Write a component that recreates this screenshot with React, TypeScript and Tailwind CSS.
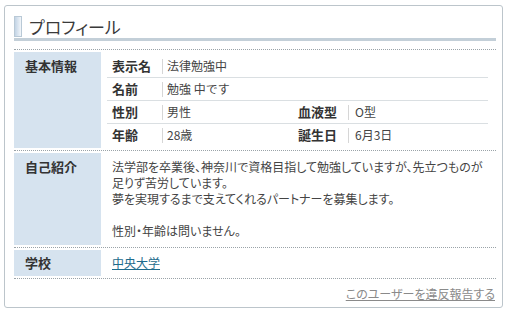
import React from "react";

const Row = ({ label, value }: { label: string; value: string }) => (
  <div className="flex items-center h-[22px]">
    <div className="w-[55px] pl-[5px] font-bold text-[13px] text-[#333]">{label}</div>
    <div className="w-px h-[15px] bg-[#d6d6d6]" />
    <div className="pl-[4px] text-[12px] text-[#444]">{value}</div>
  </div>
);

export default function App() {
  return (
    <div
      className="w-[505px] h-[312px] bg-white pt-[5px] pl-[4px] pr-[2px] pb-[4px]"
      style={{ fontFamily: '"Noto Sans CJK JP", "Noto Sans", sans-serif' }}
    >
      <div className="h-full border border-[#bcc5cb] rounded-[3px] pl-[9px] pr-[6px] pt-[10px] flex flex-col">
        {/* Title */}
        <div className="flex items-start h-[22px]">
          <div className="w-[8px] h-[21px] border border-[#b9c9d6] bg-gradient-to-r from-[#c3d4e5] to-[#f2f6fa]" />
          <div className="ml-[7px] text-[17px] leading-[21px] text-[#3a3a3a] [font-feature-settings:'palt']">
            プロフィール
          </div>
        </div>
        <div className="h-[3px] bg-[#c3cfd8]" />

        <div className="mt-[8px] border-t border-dotted border-[#9aa3a8]" />

        {/* Basic info */}
        <div className="flex py-[2px] border-b border-dotted border-[#9aa3a8]">
          <div className="w-[87px] shrink-0 bg-[#d6e3ef] pl-[11px] pt-[6px] text-[13px] leading-[16px] font-bold text-[#333]">
            基本情報
          </div>
          <div className="flex-1 pl-[6px] pr-[8px] pt-[3px] pb-[2px]">
            <div className="border-b border-[#dadfe2]">
              <Row label="表示名" value="法律勉強中" />
            </div>
            <div className="border-b border-[#dadfe2]">
              <Row label="名前" value="勉強 中です" />
            </div>
            <div className="flex border-b border-[#dadfe2]">
              <div className="w-[186px]">
                <Row label="性別" value="男性" />
              </div>
              <div className="flex items-center h-[22px]">
                <div className="w-[55px] pl-[5px] font-bold text-[13px] text-[#333]">血液型</div>
                <div className="w-px h-[15px] bg-[#d6d6d6]" />
                <div className="pl-[6px] text-[12px] text-[#444]">O型</div>
              </div>
            </div>
            <div className="flex">
              <div className="w-[186px]">
                <Row label="年齢" value="28歳" />
              </div>
              <div className="flex items-center h-[22px]">
                <div className="w-[55px] pl-[5px] font-bold text-[13px] text-[#333]">誕生日</div>
                <div className="w-px h-[15px] bg-[#d6d6d6]" />
                <div className="pl-[6px] text-[12px] text-[#444]">6月3日</div>
              </div>
            </div>
          </div>
        </div>

        {/* Self intro */}
        <div className="flex py-[2px] border-b border-dotted border-[#9aa3a8]">
          <div className="w-[87px] shrink-0 bg-[#d6e3ef] pl-[11px] pt-[6px] text-[13px] leading-[16px] font-bold text-[#333]">
            自己紹介
          </div>
          <div className="flex-1 pl-[11px] pt-[6px] pb-[6px] text-[12px] leading-[16px] text-[#444] whitespace-nowrap [font-feature-settings:'palt']">
            <div>法学部を卒業後、神奈川で資格目指して勉強していますが、先立つものが</div>
            <div>足りず苦労しています。</div>
            <div>夢を実現するまで支えてくれるパートナーを募集します。</div>
            <div className="h-[16px]" />
            <div>性別・年齢は問いません。</div>
          </div>
        </div>

        {/* School */}
        <div className="flex py-[2px] border-b border-dotted border-[#9aa3a8]">
          <div className="w-[87px] shrink-0 bg-[#d6e3ef] pl-[11px] py-[5px] text-[13px] leading-[16px] font-bold text-[#333]">
            学校
          </div>
          <div className="flex-1 pl-[11px] py-[5px] text-[12px] leading-[16px]">
            <a href="#" className="text-[#1d6b8c] underline">
              中央大学
            </a>
          </div>
        </div>

        <div className="mt-[7px] flex justify-end pr-[1px]">
          <a href="#" className="text-[12px] leading-[16px] text-[#8a8a8a] underline [font-feature-settings:'palt']">
            このユーザーを違反報告する
          </a>
        </div>
      </div>
    </div>
  );
}
